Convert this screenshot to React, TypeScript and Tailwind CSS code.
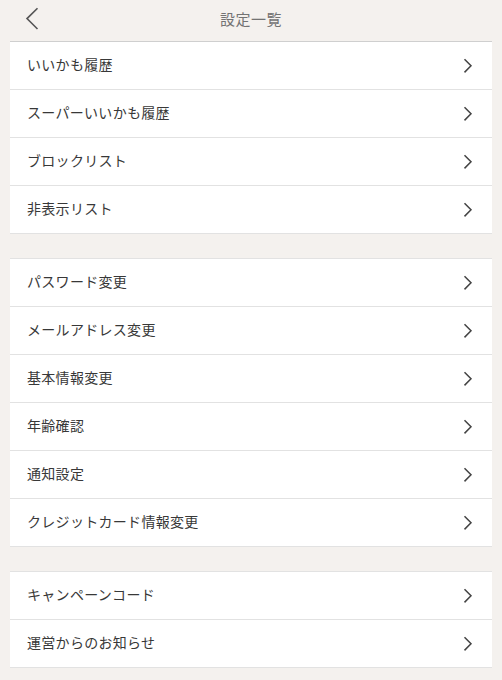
import React from "react";

const groups: string[][] = [
  ["いいかも履歴", "スーパーいいかも履歴", "ブロックリスト", "非表示リスト"],
  ["パスワード変更", "メールアドレス変更", "基本情報変更", "年齢確認", "通知設定", "クレジットカード情報変更"],
  ["キャンペーンコード", "運営からのお知らせ"],
];

function Chevron() {
  return (
    <svg width="10" height="16" viewBox="0 0 10 16" className="shrink-0">
      <path d="M1.5 1.2 L8 7.8 L1.5 14.4" fill="none" stroke="#444" strokeWidth="1.5" />
    </svg>
  );
}

export default function App() {
  return (
    <div
      className="w-[502px] min-h-[680px] bg-[#f4f1ee] pb-3"
      style={{ fontFamily: '"Noto Sans CJK JP", "Noto Sans", sans-serif' }}
    >
      <div className="h-[41px] relative flex items-center justify-center">
        <svg width="14" height="24" viewBox="0 0 14 24" className="absolute left-[25px] top-[7px]">
          <path d="M12.5 1.2 L2 11.6 L12.5 22" fill="none" stroke="#555" strokeWidth="1.6" />
        </svg>
        <span className="text-[15px] leading-none mb-[4px] text-[#737373] tracking-[0.5px]">設定一覧</span>
      </div>
      <div className="mx-[10px] flex flex-col gap-6">
        {groups.map((g, gi) => (
          <div
            key={gi}
            className={`bg-white border-t ${gi === 0 ? "border-[#cfcfcf]" : "border-[#e2e2e2]"}`}
          >
            {g.map((label) => (
              <div
                key={label}
                className="h-[48px] border-b border-[#e2e2e2] flex items-center justify-between pl-[17px] pr-[19px]"
              >
                <span className="text-[14px] leading-none mb-[3px] text-[#383838] tracking-[0.3px]">{label}</span>
                <Chevron />
              </div>
            ))}
          </div>
        ))}
      </div>
    </div>
  );
}
